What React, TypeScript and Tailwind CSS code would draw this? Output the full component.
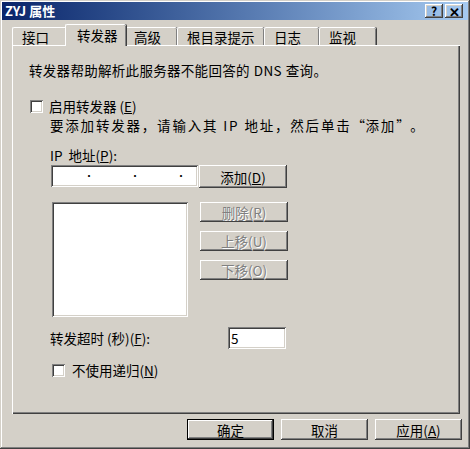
import React from 'react';

const raised =
  'shadow-[inset_-1px_-1px_0_#404040,inset_1px_1px_0_#ffffff,inset_-2px_-2px_0_#808080,inset_2px_2px_0_#d4d0c8]';
const sunken =
  'shadow-[inset_1px_1px_0_#808080,inset_-1px_-1px_0_#ffffff,inset_2px_2px_0_#404040,inset_-2px_-2px_0_#d4d0c8]';

const Btn: React.FC<{ w: string; h: string; disabled?: boolean; def?: boolean; children: React.ReactNode }> = ({
  w,
  h,
  disabled,
  def,
  children,
}) => (
  <div
    className={`${w} ${h} flex items-center justify-center bg-[#d4d0c8] ${
      def
        ? 'shadow-[inset_0_0_0_1px_#000000,inset_-2px_-2px_0_#404040,inset_2px_2px_0_#ffffff,inset_-3px_-3px_0_#808080]'
        : raised
    } ${disabled ? 'text-[#808080] [text-shadow:1px_1px_0_#ffffff]' : 'text-black'}`}
  >
    {children}
  </div>
);

const Check: React.FC = () => <div className={`w-[13px] h-[13px] bg-white shrink-0 ${sunken}`} />;

const Tab: React.FC<{ w: string; active?: boolean; label: string }> = ({ w, active, label }) => (
  <div
    className={`${w} flex items-center pl-[9px] rounded-t-[2px] border-t border-l border-white bg-[#d4d0c8] shadow-[inset_-1px_0_0_#808080,1px_0_0_#404040] ${
      active ? 'h-[22px] -mx-[2px] relative z-10 -mb-[1px] pb-[2px] pl-[11px]' : 'h-[18px]'
    }`}
  >
    {label}
  </div>
);

export default function App() {
  return (
    <div
      className="w-[470px] h-[449px] bg-[#d4d0c8] flex flex-col p-[2px] shadow-[inset_-1px_-1px_0_#404040,inset_1px_1px_0_#d4d0c8,inset_-2px_-2px_0_#808080,inset_2px_2px_0_#ffffff] text-[13.5px] leading-[16px] text-black [text-spacing-trim:space-all]"
      style={{ fontFamily: '"Noto Sans CJK SC", "Liberation Sans", sans-serif' }}
    >
      {/* title bar */}
      <div className="h-[18px] flex items-center justify-between pl-[3px] pr-[5px] bg-gradient-to-r from-[#0a246a] to-[#a6caf0]">
        <span className="text-white font-bold text-[13px]">ZYJ 属性</span>
        <div className="flex gap-[2px]">
          <div className={`w-[18px] h-[14px] flex items-center justify-center text-[12px] font-bold leading-none ${raised}`}>?</div>
          <div className={`w-[18px] h-[14px] flex items-center justify-center text-[13px] font-bold leading-none ${raised}`}>✕</div>
        </div>
      </div>

      {/* tabs */}
      <div className="flex items-end h-[23px] ml-[10px] mt-[2px]">
        <Tab w="w-[55px]" label="接口" />
        <Tab w="w-[61px]" active label="转发器" />
        <Tab w="w-[53px]" label="高级" />
        <Tab w="w-[87px]" label="根目录提示" />
        <Tab w="w-[55px]" label="日志" />
        <Tab w="w-[57px]" label="监视" />
      </div>

      {/* panel */}
      <div className="ml-[10px] w-[448px] h-[369px] border-t border-l border-white shadow-[inset_-1px_-1px_0_#404040,inset_-2px_-2px_0_#808080] flex flex-col pt-[16px]">
        <div className="pl-[16px] h-[16px] tracking-[0.3px] whitespace-nowrap">
          转发器帮助解析此服务器不能回答的<span className="mx-[4px]">DNS</span>查询。
        </div>

        <div className="flex items-center pl-[17px] mt-[20px] h-[16px]">
          <Check />
          <span className="ml-[6px] leading-[16px]">
            启用转发器 (<u>E</u>)
          </span>
        </div>

        <div className="pl-[37px] mt-[3px] h-[16px] tracking-[1.8px] whitespace-nowrap">
          要添加转发器，请输入其<span className="mx-[5px]">IP</span>地址，然后单击
          <span className="inline-block w-[14px] text-right">“</span>添加
          <span className="inline-block w-[14px] text-left">”</span>。
        </div>

        <div className="pl-[37px] mt-[14px] h-[16px] whitespace-nowrap">
          IP<span className="ml-[6px]">地址(</span>
          <u>P</u>):
        </div>

        <div className="flex pl-[38px] mt-[2px]">
          <div className={`w-[147px] h-[22px] bg-white flex items-center pl-[33px] gap-[36px] ${sunken}`}>
            <span className="text-[10px] leading-none">·</span>
            <span className="text-[10px] leading-none">·</span>
            <span className="text-[10px] leading-none">·</span>
          </div>
          <div className="ml-[1px]">
            <Btn w="w-[88px]" h="h-[23px]">
              添加(<u>D</u>)
            </Btn>
          </div>
        </div>

        <div className="flex pl-[39px] mt-[14px]">
          <div className={`w-[136px] h-[115px] bg-white ${sunken}`} />
          <div className="ml-[12px] flex flex-col gap-[9px]">
            <Btn w="w-[88px]" h="h-[20px]" disabled>
              删除(R)
            </Btn>
            <Btn w="w-[88px]" h="h-[20px]" disabled>
              上移(U)
            </Btn>
            <Btn w="w-[88px]" h="h-[20px]" disabled>
              下移(O)
            </Btn>
          </div>
        </div>

        <div className="flex items-center pl-[37px] mt-[10px]">
          <span className="w-[178px]">
            转发超时 (秒)(<u>F</u>):
          </span>
          <div className={`w-[58px] h-[22px] bg-white flex items-center pl-[3px] ${sunken}`}>5</div>
        </div>

        <div className="flex items-center pl-[39px] mt-[13px] h-[16px]">
          <Check />
          <span className="ml-[7px]">
            不使用递归(<u>N</u>)
          </span>
        </div>
      </div>

      {/* bottom buttons */}
      <div className="flex justify-end gap-[7px] mt-[5px] pr-[6px]">
        <Btn w="w-[87px]" h="h-[21px]" def>
          确定
        </Btn>
        <Btn w="w-[87px]" h="h-[21px]">
          取消
        </Btn>
        <Btn w="w-[87px]" h="h-[21px]">
          应用(<u>A</u>)
        </Btn>
      </div>
    </div>
  );
}
